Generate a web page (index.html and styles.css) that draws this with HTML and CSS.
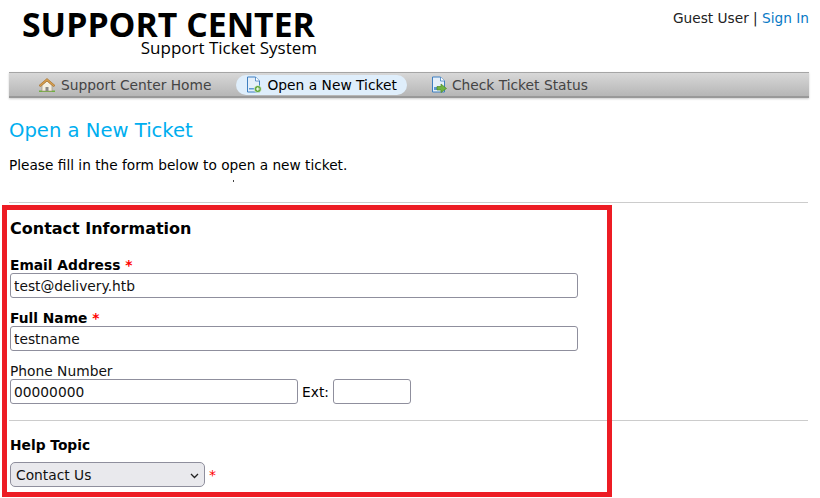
FILE: index.html
```html
<!DOCTYPE html>
<html lang="en">
<head>
<meta charset="utf-8">
<title>Open a New Ticket</title>
<link rel="stylesheet" href="styles.css">
</head>
<body>
<div class="page">
  <header class="header">
    <div class="logo">
      <div class="logo-main">SUPPORT CENTER</div>
      <div class="logo-sub">Support Ticket System</div>
    </div>
    <div class="user">Guest User | <a href="#">Sign In</a></div>
  </header>
  <nav class="nav">
    <a class="nav-item home" href="#">
      <svg width="18" height="16" viewBox="0 0 18 16"><path d="M1 15h16v-1.500H1z" fill="#6fae3f"/><path d="M4 8v6h10V8L9 4z" fill="#f3efe2" stroke="#a89a7c" stroke-width=".7"/><path d="M7.500 14v-4h3v4z" fill="#8a8a88"/><path d="M1 8.500 9 1.500l8 7-1.500 1L9 4 2.500 9.500z" fill="#d9a04e" stroke="#a5702c" stroke-width=".7"/></svg>
      Support Center Home</a>
    <a class="nav-item active" href="#">
      <svg width="16" height="17" viewBox="0 0 16 17"><path d="M1.500 1h8l4 4v11h-12z" fill="#e4effa" stroke="#3f7fc0"/><path d="M9.500 1v4h4" fill="#fff" stroke="#3f7fc0" stroke-width=".8"/><path d="M3 12h6v1.500H3z" fill="#5b9ad6"/><circle cx="11.800" cy="13" r="3.600" fill="#5fa83c" stroke="#fff" stroke-width=".6"/><path d="M10 12.500h1.300v-1.300h1v1.300h1.300v1h-1.300v1.300h-1v-1.300H10z" fill="#fff"/></svg>
      Open a New Ticket</a>
    <a class="nav-item" href="#">
      <svg width="16" height="17" viewBox="0 0 16 17"><path d="M1.500 1h8l4 4v11h-12z" fill="#e4effa" stroke="#3f7fc0"/><path d="M9.500 1v4h4" fill="#fff" stroke="#3f7fc0" stroke-width=".8"/><path d="M3 11h4v3H3z" fill="#5b9ad6"/><path d="M6 10.500h4V8l5.500 4.500L10 16.500V14H6z" fill="#70b440" stroke="#4d8a2a" stroke-width=".7"/></svg>
      Check Ticket Status</a>
  </nav>
  <h1 class="title">Open a New Ticket</h1>
  <p class="intro">Please fill in the form below to open a new ticket.</p>
  <div class="dot-row"><span class="dot"></span></div>
  <hr class="rule first">
  <form class="form">
    <h2 class="section">Contact Information</h2>
    <label class="label strong label-email">Email Address <span class="req">*</span></label>
    <input class="field wide" type="text" value="test@delivery.htb">
    <label class="label strong label-next">Full Name <span class="req">*</span></label>
    <input class="field wide" type="text" value="testname">
    <label class="label label-next">Phone Number</label>
    <div class="phone-row">
      <input class="field phone" type="text" value="00000000">
      <span class="ext-label">Ext:</span>
      <input class="field ext" type="text" value="">
    </div>
    <hr class="rule second">
    <div class="label strong topic-label">Help Topic</div>
    <div class="topic-row">
      <select class="topic"><option>Contact Us</option></select>
      <span class="req">*</span>
    </div>
  </form>
</div>
<div class="highlight"></div>
</body>
</html>
```
FILE: styles.css
```css
* { box-sizing: border-box; }
html, body { margin: 0; height: 498px; overflow: hidden; background: #fff; }
body { font-family: "DejaVu Sans", sans-serif; font-size: 14px; color: #000; position: relative; }
.page { padding: 0 11px 0 9px; }
.header { display: flex; justify-content: space-between; height: 72px; }
.logo { margin-left: 13px; width: 295px; padding-top: 8px; font-family: "Open Sans", sans-serif; color: #000; }
.logo-main { font-size: 33.800px; font-weight: 700; line-height: 32px; white-space: nowrap; }
.logo-sub { font-size: 17px; line-height: 16px; text-align: right; white-space: nowrap; }
.user { padding-top: 10px; line-height: 17px; color: #222; font-size: 13.700px; }
.user a { color: #0a7ac6; text-decoration: none; }
.nav { display: flex; align-items: center; height: 26px; padding-left: 26px; font-size: 13.800px;
  background: linear-gradient(#d8d8d8, #b6b6b6); border-top: 1px solid #a5a5a5; border-bottom: 2px solid #999;
  box-shadow: 0 1px 2px #ccc; }
.nav-item { display: flex; align-items: center; gap: 5px; height: 20px; padding: 0 10px 0 3px; margin-right: 16px; color: #444; text-decoration: none; line-height: 20px; white-space: nowrap; }
.nav-item.home { margin-right: 14px; }
.nav-item.active { background: #dfeefb; border-radius: 10px; color: #000; padding: 0 10px; gap: 6px; margin-right: 21px; }
.title { margin: 21px 0 0; font-size: 19.600px; font-weight: 400; line-height: 24px; color: #00aeef; }
.intro { margin: 14px 0 0; line-height: 17px; color: #000; font-size: 13.700px; }
.dot-row { height: 22px; position: relative; }
.dot { display: block; width: 1px; height: 2px; background: #444; margin: 6px 0 0 224px; }
.rule { border: 0; border-top: 1px solid #ccc; margin: 0; }
.first { margin-right: 1px; margin-left: 0; }
.form { padding-left: 1px; }
.section { margin: 16px 0 0; font-size: 16px; font-weight: 700; line-height: 19px; color: #000; }
.label { display: block; line-height: 17px; color: #111; font-size: 13.800px; }
.strong { font-weight: 700; color: #000; }
.label-email { margin-top: 19px; height: 16px; }
.label-next { margin-top: 12px; height: 16px; }
.req { color: #f00; font-weight: 700; }
.field { display: block; height: 25px; border: 1px solid #8f8f9d; border-radius: 3px; padding: 1px 3px; font: 13.800px "DejaVu Sans", sans-serif; color: #111; background: #fff; }
.wide { width: 568px; }
.phone-row { display: flex; align-items: center; }
.phone { width: 288px; }
.ext-label { margin: 0 4px; font-size: 13.800px; }
.ext { width: 78px; }
.second { margin: 16px 1px 0 -1px; }
.topic-label { margin-top: 16px; }
.topic-row { display: flex; align-items: center; gap: 4px; margin-top: 8px; }
.topic-row .req { margin-top: 1px; font-weight: 400; }
.topic { appearance: none; width: 195px; height: 25px; border: 1px solid #8f8f9d; border-radius: 5px; font: 13.800px "DejaVu Sans", sans-serif; color: #111; padding-left: 5px;
  background: #e9e9ed url("data:image/svg+xml,%3Csvg xmlns='http://www.w3.org/2000/svg' width='9' height='6'%3E%3Cpath d='M1 1l3.500 3.500L8 1' fill='none' stroke='%23222' stroke-width='1.300'/%3E%3C/svg%3E") no-repeat 179px 10px; }
.highlight { position: absolute; left: 2px; top: 205px; width: 610px; height: 292px; border: 5px solid #ed1c24; pointer-events: none; }
```
